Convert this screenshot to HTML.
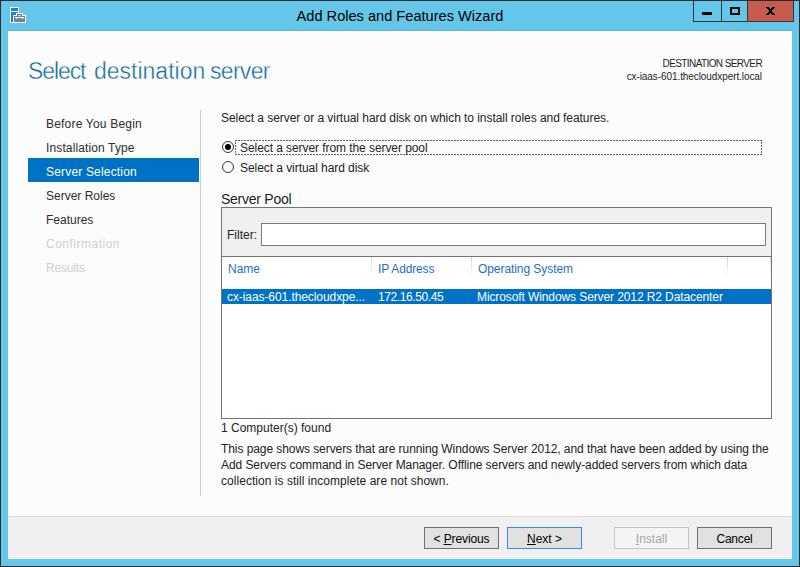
<!DOCTYPE html>
<html><head><meta charset="utf-8">
<style>
*{margin:0;padding:0;box-sizing:border-box}
html,body{width:800px;height:567px;overflow:hidden;background:#2b2b2b}
body{position:relative;font-family:"Liberation Sans",sans-serif;color:#222}
.a{position:absolute;white-space:nowrap}
#frame{position:absolute;left:1px;top:1px;width:798px;height:565px;background:#64c7e9}
#content{position:absolute;left:8px;top:30px;width:784px;height:529px;background:#fcfcfc;border-top:1px solid #5cb9d9}
#footer{position:absolute;left:8px;top:516px;width:784px;height:43px;background:#f0f0f0;border-top:1px solid #dcdcdc}
.tb{position:absolute;top:0;height:22px;border:1px solid #343434;border-top-color:#2b2b2b}
.t12{font-size:12px;line-height:16px}
.nav{color:#2c2c2c;left:46px;font-size:12px;line-height:24px;height:24px}
.hd{top:56px;font-size:23px;line-height:30px;color:#0f6c9a;-webkit-text-stroke:0.4px #fcfcfc}
.dis{color:#cfcfcf}
.btn{position:absolute;top:527px;height:22px;width:75px;background:#e1e1e1;border:1px solid #707070;font-size:12px;line-height:22px;text-align:center;color:#000}
</style></head><body>
<div id="frame"></div>
<!-- title bar -->
<svg class="a" style="left:8px;top:5px" width="20" height="20" viewBox="0 0 20 20" shape-rendering="crispEdges">
  <rect x="2" y="2" width="9" height="16" fill="#fff"/>
  <rect x="3" y="3" width="7" height="3" fill="#1a7fd6"/>
  <rect x="3" y="7" width="7" height="10" fill="#1a7fd6"/>
  <rect x="8" y="8" width="7" height="3" fill="#fff"/>
  <rect x="5" y="10" width="13" height="8" fill="#fff"/>
  <rect x="6" y="11" width="11" height="6" fill="#6f8597"/>
  <rect x="9" y="9" width="5" height="2" fill="#6f8597"/>
  <rect x="10" y="10" width="3" height="1" fill="#c9d3db"/>
  <rect x="7" y="12" width="9" height="1" fill="#fff"/>
  <rect x="8" y="13" width="1" height="1" fill="#fff"/>
  <rect x="14" y="13" width="1" height="1" fill="#fff"/>
</svg>
<div class="a" style="left:0;width:800px;top:6px;text-align:center;font-size:14.6px;line-height:20px;color:#000">Add Roles and Features Wizard</div>
<div class="tb" style="left:693px;width:29px;background:#64c7e9"><div class="a" style="left:8px;top:11px;width:10px;height:3px;background:#000"></div></div>
<div class="tb" style="left:721px;width:27px;background:#64c7e9"><div class="a" style="left:8px;top:6px;width:10px;height:8px;border:2px solid #000"></div></div>
<div class="tb" style="left:747px;width:47px;background:#c65b4f"><svg class="a" style="left:18px;top:6px" width="9" height="8" viewBox="0 0 9 8" shape-rendering="crispEdges"><path d="M0 0h3v1h-3zM6 0h3v1h-3zM1 1h3v1h-3zM5 1h3v1h-3zM2 2h5v1h-5zM3 3h3v2h-3zM2 5h5v1h-5zM1 6h3v1h-3zM5 6h3v1h-3zM0 7h3v1h-3zM6 7h3v1h-3z" fill="#000"/></svg></div>

<div id="content"></div>
<div id="footer"></div>

<!-- header -->
<div class="a hd" style="left:28px;letter-spacing:-1.1px">Select</div>
<div class="a hd" style="left:94px;letter-spacing:0px">destination</div>
<div class="a hd" style="left:210px;letter-spacing:-0.7px">server</div>
<div class="a" style="right:38px;top:57px;font-size:10px;line-height:14px;text-align:right;color:#1e1e1e;letter-spacing:-0.6px">DESTINATION SERVER</div>
<div class="a" style="right:38px;top:70px;font-size:10px;line-height:14px;text-align:right;color:#1e1e1e;letter-spacing:-0.08px">cx-iaas-601.thecloudxpert.local</div>

<!-- nav -->
<div class="a" style="left:28px;top:158px;width:171px;height:24px;background:#0072c6"></div>
<div class="a" style="left:200px;top:110px;width:1px;height:386px;background:#cccccc"></div>
<div class="a nav" style="top:112px;letter-spacing:0.2px">Before You Begin</div>
<div class="a nav" style="top:136px;letter-spacing:0.125px">Installation Type</div>
<div class="a nav" style="top:160px;color:#fff;letter-spacing:0.18px">Server Selection</div>
<div class="a nav" style="top:184px">Server Roles</div>
<div class="a nav" style="top:208px">Features</div>
<div class="a nav dis" style="top:232px;letter-spacing:0.5px">Confirmation</div>
<div class="a nav dis" style="top:256px;letter-spacing:-0.17px">Results</div>

<!-- main -->
<div class="a t12" style="left:221px;top:110px;letter-spacing:-0.05px">Select a server or a virtual hard disk on which to install roles and features.</div>

<svg class="a" style="left:222px;top:141px" width="12" height="12" viewBox="0 0 12 12"><circle cx="6" cy="6" r="5.5" fill="#fff" stroke="#333" stroke-width="1"/><circle cx="6" cy="6" r="3" fill="#000"/></svg>
<div class="a" style="left:235px;top:140px;width:527px;height:1px;background:repeating-linear-gradient(90deg,#646464 0 2px,transparent 2px 3px)"></div>
<div class="a" style="left:235px;top:154px;width:527px;height:1px;background:repeating-linear-gradient(90deg,#646464 0 2px,transparent 2px 3px)"></div>
<div class="a" style="left:235px;top:142px;width:1px;height:11px;background:repeating-linear-gradient(180deg,#646464 0 2px,transparent 2px 3px)"></div>
<div class="a" style="left:761px;top:142px;width:1px;height:11px;background:repeating-linear-gradient(180deg,#646464 0 2px,transparent 2px 3px)"></div>
<div class="a t12" style="left:240px;top:140px;letter-spacing:-0.07px">Select a server from the server pool</div>
<svg class="a" style="left:222px;top:161px" width="12" height="12" viewBox="0 0 12 12"><circle cx="6" cy="6" r="5.5" fill="#fff" stroke="#333" stroke-width="1"/></svg>
<div class="a t12" style="left:240px;top:160px;letter-spacing:-0.06px">Select a virtual hard disk</div>

<div class="a" style="left:221px;top:190px;font-size:14px;line-height:18px;letter-spacing:-0.25px">Server Pool</div>

<div class="a" style="left:221px;top:207px;width:551px;height:212px;background:#fff;border:1px solid #747474"></div>
<div class="a" style="left:222px;top:208px;width:549px;height:49px;background:#f0f0f0;border-bottom:1px solid #747474"></div>
<div class="a t12" style="left:227px;top:227px">Filter:</div>
<div class="a" style="left:261px;top:223px;width:505px;height:23px;background:#fff;border:1px solid #7a7a7a"></div>

<div class="a t12" style="left:228px;top:261px;color:#1f6fc6">Name</div>
<div class="a t12" style="left:378px;top:261px;color:#1f6fc6;letter-spacing:-0.15px">IP Address</div>
<div class="a t12" style="left:478px;top:261px;color:#1f6fc6;letter-spacing:-0.07px">Operating System</div>
<div class="a" style="left:371px;top:257px;width:1px;height:21px;background:linear-gradient(#d4d4d4,#fff)"></div>
<div class="a" style="left:471px;top:257px;width:1px;height:21px;background:linear-gradient(#d4d4d4,#fff)"></div>
<div class="a" style="left:727px;top:257px;width:1px;height:21px;background:linear-gradient(#d4d4d4,#fff)"></div>
<div class="a" style="left:770px;top:257px;width:1px;height:21px;background:linear-gradient(#dcdcdc,#fff)"></div>

<div class="a" style="left:222px;top:289px;width:549px;height:15px;background:#0072c6"></div>
<div class="a t12" style="left:227px;top:290px;color:#fff;line-height:15px;letter-spacing:-0.08px">cx-iaas-601.thecloudxpe...</div>
<div class="a t12" style="left:378px;top:290px;color:#fff;line-height:15px;letter-spacing:-0.4px">172.16.50.45</div>
<div class="a t12" style="left:477px;top:290px;color:#fff;line-height:15px;letter-spacing:-0.1px">Microsoft Windows Server 2012 R2 Datacenter</div>

<div class="a t12" style="left:221px;top:420px">1 Computer(s) found</div>
<div class="a t12" style="left:221px;top:441px;letter-spacing:-0.075px">This page shows servers that are running Windows Server 2012, and that have been added by using the</div>
<div class="a t12" style="left:221px;top:457px;letter-spacing:-0.07px">Add Servers command in Server Manager. Offline servers and newly-added servers from which data</div>
<div class="a t12" style="left:221px;top:473px;letter-spacing:0.04px">collection is still incomplete are not shown.</div>

<!-- footer buttons -->
<div class="btn" style="left:424px;letter-spacing:-0.1px">&lt; <u>P</u>revious</div>
<div class="btn" style="left:507px;border-color:#2f8cf5"><u>N</u>ext &gt;</div>
<div class="btn" style="left:614px;border-color:#c4c4c4;background:#f4f4f4;color:#a6a6a6"><u>I</u>nstall</div>
<div class="btn" style="left:697px;letter-spacing:-0.2px">Cancel</div>
</body></html>
